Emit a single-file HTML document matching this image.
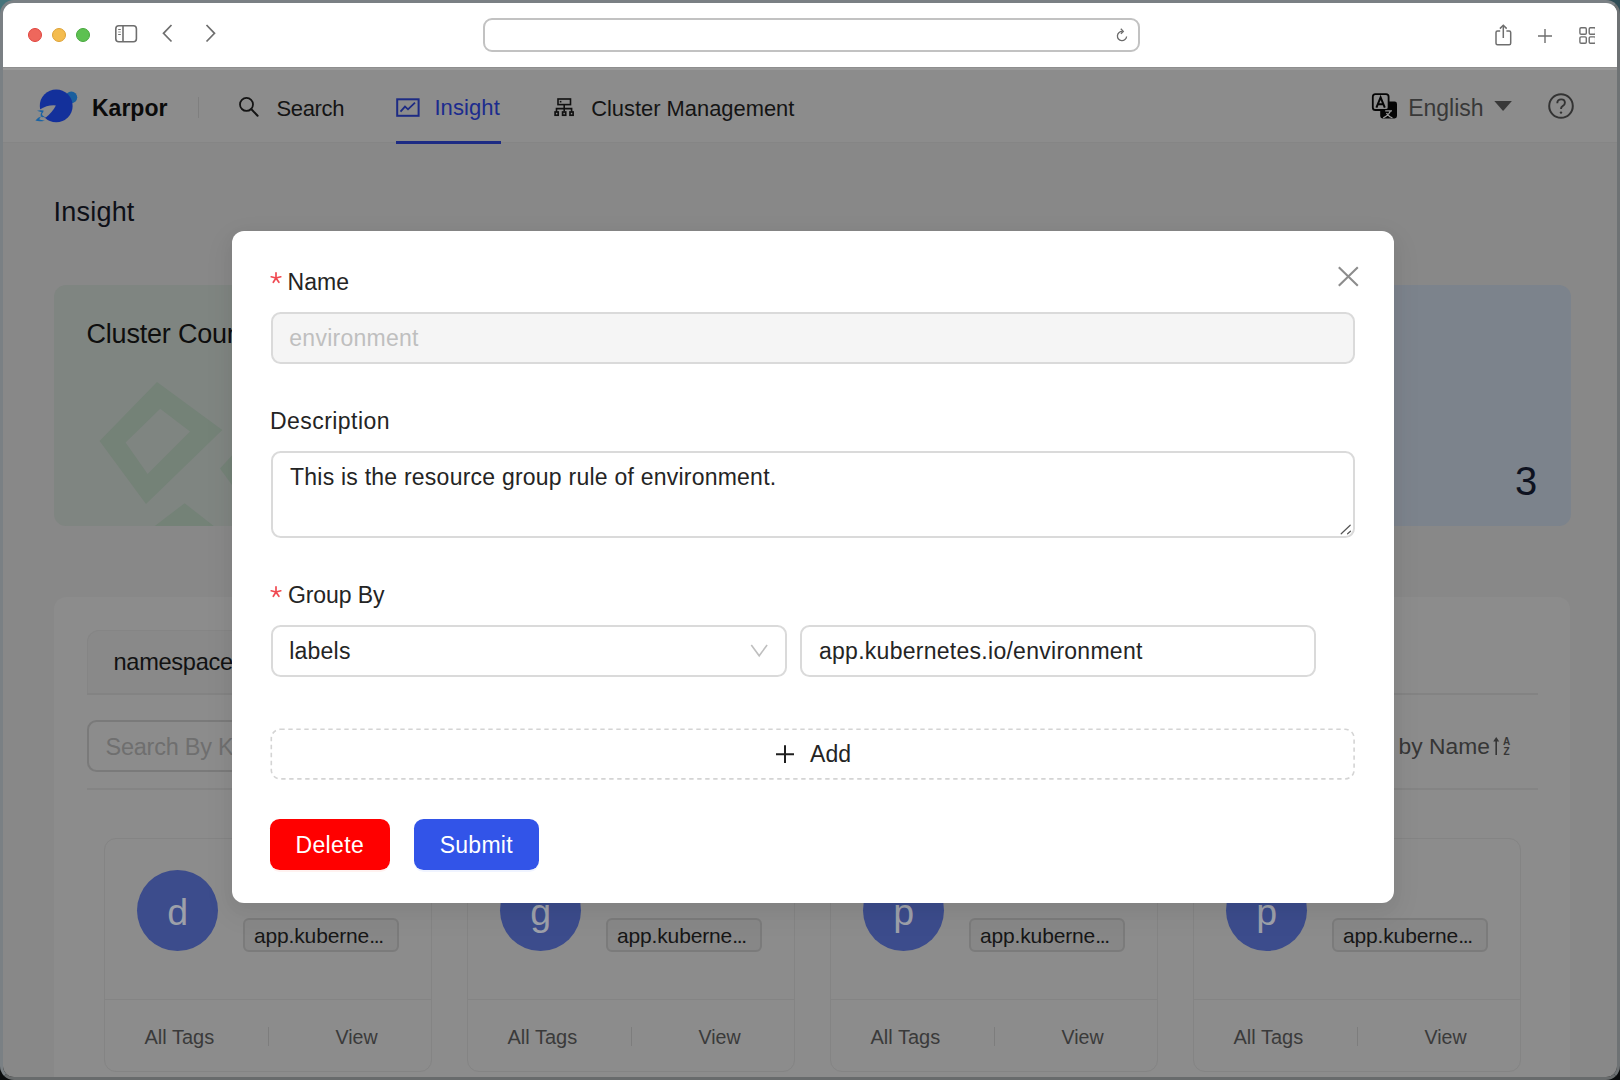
<!DOCTYPE html>
<html><head><meta charset="utf-8">
<style>
*{box-sizing:border-box;margin:0;padding:0}
html,body{width:1620px;height:1080px;overflow:hidden}
body{background:#7a8084;font-family:"Liberation Sans",sans-serif;position:relative}
.a{position:absolute}
.t{position:absolute;white-space:nowrap;line-height:1}
#win{position:absolute;left:0;top:0;width:1620px;height:1080px;clip-path:inset(3px 3px 3px 3px round 11px);background:#888}
</style></head><body>
<!-- desktop corners -->
<div class="a" style="left:0;top:0;width:16px;height:16px;background:#44737a"></div>
<div class="a" style="right:0;top:0;width:16px;height:16px;background:#2e4c55"></div>
<div class="a" style="left:0;bottom:0;width:16px;height:16px;background:#0a0c0d"></div>
<div class="a" style="right:0;bottom:0;width:16px;height:16px;background:#0a0c0d"></div>
<div class="a" style="left:0;top:0;width:1620px;height:1080px;border-radius:14px;border:3px solid #7a8084;border-bottom-color:#686b6c;border-right-color:#6e7274"></div>

<div id="win">
<!-- ===== TOOLBAR ===== -->
<div class="a" style="left:0;top:0;width:1620px;height:67px;background:#fff"></div>
<div class="a" style="left:0;top:67px;width:1620px;height:1px;background:#8e8e8e"></div><div class="a" style="left:0;top:68px;width:1620px;height:2px;background:#999"></div>
<!-- traffic lights -->
<div class="a" style="left:28px;top:28px;width:14px;height:14px;border-radius:50%;background:#ee675c;border:0.5px solid #e0443e"></div>
<div class="a" style="left:52px;top:28px;width:14px;height:14px;border-radius:50%;background:#f4bc4f;border:0.5px solid #dea236"></div>
<div class="a" style="left:76px;top:28px;width:14px;height:14px;border-radius:50%;background:#5dc151;border:0.5px solid #48a83e"></div>
<!-- sidebar icon -->
<svg class="a" style="left:110px;top:20px" width="32" height="28" viewBox="0 0 32 28">
  <rect x="5.8" y="5.8" width="20.6" height="16" rx="3" fill="none" stroke="#6e6e6e" stroke-width="1.6"/>
  <line x1="13" y1="5.8" x2="13" y2="21.8" stroke="#6e6e6e" stroke-width="1.6"/>
  <line x1="8.2" y1="9.5" x2="10.8" y2="9.5" stroke="#6e6e6e" stroke-width="1"/>
  <line x1="8.2" y1="12" x2="10.8" y2="12" stroke="#9a9a9a" stroke-width="1"/>
  <line x1="8.2" y1="14.5" x2="10.8" y2="14.5" stroke="#6e6e6e" stroke-width="1"/>
</svg>
<!-- back / fwd -->
<svg class="a" style="left:155px;top:20px" width="70" height="28" viewBox="0 0 70 28">
  <polyline points="16.5,5 8.5,13.3 16.5,21.5" fill="none" stroke="#6e6e6e" stroke-width="1.7"/>
  <polyline points="51.5,5 59.5,13.3 51.5,21.5" fill="none" stroke="#6e6e6e" stroke-width="1.7"/>
</svg>
<!-- url bar -->
<div class="a" style="left:483px;top:18px;width:657px;height:34px;border:2px solid #c2c2c2;border-radius:9px;background:#fff"></div>
<svg class="a" style="left:1112px;top:24px" width="22" height="22" viewBox="0 0 22 22">
  <path d="M14.6 12.5 A4.6 4.6 0 1 1 10.5 7.5" fill="none" stroke="#6b6b6b" stroke-width="1.3"/>
  <polyline points="8.8,4.8 11.3,7.4 8.9,9.7" fill="none" stroke="#6b6b6b" stroke-width="1.3"/>
</svg>
<!-- right toolbar icons -->
<svg class="a" style="left:1488px;top:18px" width="120" height="34" viewBox="0 0 120 34">
  <path d="M12.2 13 H9.5 Q8 13 8 14.5 V25.3 Q8 26.8 9.5 26.8 H21.2 Q22.7 26.8 22.7 25.3 V14.5 Q22.7 13 21.2 13 H18.4" fill="none" stroke="#6e6e6e" stroke-width="1.5"/>
  <line x1="15.3" y1="7.5" x2="15.3" y2="20" stroke="#6e6e6e" stroke-width="1.5"/>
  <polyline points="11.9,10.6 15.3,7.2 18.7,10.6" fill="none" stroke="#6e6e6e" stroke-width="1.5"/>
  <line x1="50" y1="18" x2="64" y2="18" stroke="#6e6e6e" stroke-width="1.4"/>
  <line x1="57" y1="11" x2="57" y2="25" stroke="#6e6e6e" stroke-width="1.4"/>
  <rect x="91.9" y="9.8" width="6.4" height="6.4" rx="1.2" fill="none" stroke="#6e6e6e" stroke-width="1.4"/>
  <rect x="101.2" y="9.8" width="6.4" height="6.4" rx="1.2" fill="none" stroke="#6e6e6e" stroke-width="1.4"/>
  <rect x="91.9" y="18.9" width="6.4" height="6.4" rx="1.2" fill="none" stroke="#6e6e6e" stroke-width="1.4"/>
  <rect x="101.2" y="18.9" width="6.4" height="6.4" rx="1.2" fill="none" stroke="#6e6e6e" stroke-width="1.4"/>
</svg>
<div class="a" style="left:1595px;top:20px;width:6px;height:30px;background:#fff"></div>
<div class="a" style="left:1613px;top:3px;width:4px;height:64px;background:#fff"></div>

<!-- ===== PAGE (under mask) ===== -->
<div class="a" style="left:0;top:70px;width:1620px;height:73px;background:#8c8c8c;border-bottom:1px solid #858585"></div>

<!-- header content -->
<svg class="a" style="left:30px;top:82px" width="60" height="48" viewBox="0 0 60 48">
  <circle cx="41.3" cy="15.3" r="5.9" fill="#1a5f9e"/>
  <circle cx="26.2" cy="23.9" r="16.4" fill="#13309b"/>
  <path d="M9.8 27.6 Q17.5 22.6 25.9 23.4 Q22.5 30 15.8 35.4 L9 34 Z" fill="#8c8c8c"/>
  <path d="M7 28.8 Q10.5 27.6 13.6 28.6 L13.2 30.2 Q11.5 31.2 12.2 33 Q13 34.3 14.8 34.2 L13.2 35.2 Q11 35.4 10.6 33.6 Q10.4 31.4 11.6 30.2 Q9.5 29.6 7 28.8 Z" fill="#1a62a3"/>
  <path d="M5.4 38.6 Q8 35.2 11.6 34.2 Q9.2 36.2 9.4 37.6 Q11.5 38.6 15 38.4 Q10 40.2 5.4 38.6 Z" fill="#1a62a3"/>
</svg>
<div class="t" style="left:92px;top:97px;font-size:23px;font-weight:700;color:#0b0b0b">Karpor</div>
<div class="a" style="left:198px;top:97px;width:1px;height:21px;background:#7f7f7f"></div>
<svg class="a" style="left:234px;top:92px" width="30" height="30" viewBox="0 0 30 30">
  <circle cx="12.5" cy="12.4" r="6.5" fill="none" stroke="#141414" stroke-width="1.8"/>
  <line x1="17.4" y1="17.3" x2="23.6" y2="23.8" stroke="#141414" stroke-width="2" stroke-linecap="round"/>
</svg>
<div class="t" style="left:276.5px;top:98px;font-size:22px;letter-spacing:-0.35px;color:#141414">Search</div>
<svg class="a" style="left:390px;top:92px" width="34" height="30" viewBox="0 0 34 30">
  <rect x="7.2" y="7.3" width="21.4" height="16.5" fill="none" stroke="#1d2b84" stroke-width="2"/>
  <polyline points="10.5,19.6 15,14.6 18,17.3 25,10.7" fill="none" stroke="#1d2b84" stroke-width="1.8"/>
</svg>
<div class="t" style="left:434.4px;top:97.4px;font-size:22px;color:#1b2b8e;letter-spacing:0.1px">Insight</div>
<div class="a" style="left:396px;top:141px;width:105px;height:3px;background:#1d2b84"></div>
<svg class="a" style="left:550px;top:92px" width="30" height="30" viewBox="0 0 30 30">
  <rect x="8" y="7" width="12.5" height="5.6" fill="none" stroke="#111" stroke-width="1.6"/>
  <rect x="9.8" y="8.9" width="1.6" height="1.6" fill="#111"/>
  <line x1="14.2" y1="12.6" x2="14.2" y2="19.5" stroke="#111" stroke-width="1.6"/>
  <polyline points="6.5,20 6.5,16.6 21.6,16.6 21.6,20" fill="none" stroke="#111" stroke-width="1.6"/>
  <rect x="5.1" y="20" width="3.1" height="3.2" fill="none" stroke="#111" stroke-width="1.7"/>
  <rect x="12.6" y="20" width="3.1" height="3.2" fill="none" stroke="#111" stroke-width="1.7"/>
  <rect x="20" y="20" width="3.1" height="3.2" fill="none" stroke="#111" stroke-width="1.7"/>
</svg>
<div class="t" style="left:591.2px;top:97.8px;font-size:21.9px;color:#141414">Cluster Management</div>
<svg class="a" style="left:1366px;top:88px" width="36" height="36" viewBox="0 0 36 36">
  <rect x="14.2" y="13.5" width="16.8" height="17" rx="2.4" fill="#050505"/>
  <rect x="6.8" y="6.2" width="15.8" height="15.8" rx="2.6" fill="#8c8c8c" stroke="#050505" stroke-width="1.8"/>
  <path d="M10.4 19.6 L14.6 9.4 L18.8 19.6 M11.9 16.2 H17.3" fill="none" stroke="#050505" stroke-width="2"/>
  <path d="M19.2 22.8 H26 M24.6 22.8 Q22.5 27.5 17.2 29.8 M20.4 25.2 Q23 28.8 26.5 30" fill="none" stroke="#9a9a9a" stroke-width="1.3"/>
</svg>
<div class="t" style="left:1408.2px;top:96.6px;font-size:23px;color:#383838">English</div>
<svg class="a" style="left:1490px;top:97px" width="26" height="18" viewBox="0 0 26 18">
  <polygon points="4.3,4 21.9,4 13.1,14.1" fill="#383838"/>
</svg>
<svg class="a" style="left:1545px;top:90px" width="32" height="32" viewBox="0 0 32 32">
  <circle cx="16" cy="16" r="11.8" fill="none" stroke="#333" stroke-width="2"/>
  <path d="M12.3 13.2 Q12.3 9.4 16.2 9.4 Q19.9 9.4 19.9 12.8 Q19.9 15 17.6 16.2 Q16 17.1 16 19" fill="none" stroke="#333" stroke-width="1.9"/>
  <circle cx="16" cy="22.6" r="1.2" fill="#333"/>
</svg>

<!-- page body -->
<div class="t" style="left:53.6px;top:199px;font-size:27px;letter-spacing:0.2px;color:#0e1018">Insight</div>
<!-- stat card 1 (green) -->
<div class="a" style="left:54px;top:285px;width:460px;height:241px;border-radius:12px;background:#7f8581;overflow:hidden">
  <svg class="a" style="left:0;top:0" width="460" height="241" viewBox="54 285 460 241">
    <path fill-rule="evenodd" fill="#748277" d="M157 382 L222.3 430 L146 504 L99.6 441 Z M160.2 408.8 L125.6 442.6 L147.6 474 L190 431.6 Z"/>
    <path fill="#748277" d="M184.6 503.2 L238 545 L130 545 Z"/>
    <path fill="#748277" d="M220 468.6 L260 425 L290 470 L250 510 Z"/>
  </svg>
</div>
<div class="t" style="left:86.5px;top:320.5px;font-size:27px;letter-spacing:-0.2px;color:#0e0e0e">Cluster Count</div>
<!-- stat card 3 (blue) -->
<div class="a" style="left:1110px;top:285px;width:460.5px;height:241px;border-radius:12px;background:#7c838c"></div>
<div class="t" style="left:1515px;top:460.5px;font-size:40px;color:#0e1220">3</div>
<!-- main panel -->
<div class="a" style="left:54px;top:597px;width:1516px;height:520px;border-radius:12px;background:#8c8c8c"></div>
<!-- tabs -->
<div class="a" style="left:87px;top:630px;width:400px;height:63.6px;background:#898989;border:1px solid #858585;border-bottom:none;border-radius:12px 12px 0 0"></div>
<div class="a" style="left:87px;top:693px;width:1451px;height:1.6px;background:#838383"></div>
<div class="t" style="left:113.5px;top:651px;font-size:23.6px;letter-spacing:-0.3px;color:#121212">namespace</div>
<!-- search -->
<div class="a" style="left:86.5px;top:720px;width:400px;height:52px;border:2px solid #7a7a7a;border-radius:9.6px"></div>
<div class="t" style="left:105.5px;top:735.8px;font-size:23.5px;letter-spacing:-0.25px;color:#6f6f6f">Search By Keyword</div>
<div class="t" style="left:1398.6px;top:734.8px;font-size:22.8px;color:#363636">by Name</div>
<svg class="a" style="left:1488px;top:732px" width="30" height="28" viewBox="0 0 30 28">
  <line x1="8.2" y1="8" x2="8.2" y2="23" stroke="#363636" stroke-width="1.6"/>
  <polygon points="5.2,9.5 8.2,5 11.2,9.5" fill="#363636"/>
  <text x="18.6" y="12.6" font-family="Liberation Sans" font-size="10" font-weight="700" fill="#363636" text-anchor="middle">A</text>
  <text x="18.6" y="23.2" font-family="Liberation Sans" font-size="10" font-weight="700" fill="#363636" text-anchor="middle">Z</text>
</svg>
<div class="a" style="left:87px;top:788px;width:1451px;height:2px;background:#848484"></div>
<div class="a" style="left:104px;top:838px;width:328px;height:234px;border-radius:12px;background:#8c8c8c;border:1px solid #848484"></div>
<div class="a" style="left:137.2px;top:870px;width:81px;height:81px;border-radius:50%;background:#3c4c8c"></div>
<div class="t" style="left:137.2px;top:894px;width:81px;text-align:center;font-size:37.5px;color:#9da0a9">d</div>
<div class="a" style="left:242.5px;top:917.5px;width:156.2px;height:34px;border-radius:6px;background:#878787;border:2px solid #7b7b7b"></div>
<div class="t" style="left:254px;top:924.5px;font-size:21px;letter-spacing:-0.15px;color:#161616">app.kuberne<span style="letter-spacing:-1.3px">...</span></div>
<div class="a" style="left:104px;top:999px;width:328px;height:1px;background:#848484"></div>
<div class="a" style="left:268px;top:1027px;width:1px;height:19px;background:#7d7d7d"></div>
<div class="t" style="left:144.5px;top:1026.5px;font-size:20px;color:#3a3a3a">All Tags</div>
<div class="t" style="left:335.5px;top:1027.8px;font-size:19.6px;color:#3a3a3a">View</div>
<div class="a" style="left:467px;top:838px;width:328px;height:234px;border-radius:12px;background:#8c8c8c;border:1px solid #848484"></div>
<div class="a" style="left:500.2px;top:870px;width:81px;height:81px;border-radius:50%;background:#3c4c8c"></div>
<div class="t" style="left:500.2px;top:894px;width:81px;text-align:center;font-size:37.5px;color:#9da0a9">g</div>
<div class="a" style="left:605.5px;top:917.5px;width:156.2px;height:34px;border-radius:6px;background:#878787;border:2px solid #7b7b7b"></div>
<div class="t" style="left:617px;top:924.5px;font-size:21px;letter-spacing:-0.15px;color:#161616">app.kuberne<span style="letter-spacing:-1.3px">...</span></div>
<div class="a" style="left:467px;top:999px;width:328px;height:1px;background:#848484"></div>
<div class="a" style="left:631px;top:1027px;width:1px;height:19px;background:#7d7d7d"></div>
<div class="t" style="left:507.5px;top:1026.5px;font-size:20px;color:#3a3a3a">All Tags</div>
<div class="t" style="left:698.5px;top:1027.8px;font-size:19.6px;color:#3a3a3a">View</div>
<div class="a" style="left:830px;top:838px;width:328px;height:234px;border-radius:12px;background:#8c8c8c;border:1px solid #848484"></div>
<div class="a" style="left:863.2px;top:870px;width:81px;height:81px;border-radius:50%;background:#3c4c8c"></div>
<div class="t" style="left:863.2px;top:894px;width:81px;text-align:center;font-size:37.5px;color:#9da0a9">p</div>
<div class="a" style="left:968.5px;top:917.5px;width:156.2px;height:34px;border-radius:6px;background:#878787;border:2px solid #7b7b7b"></div>
<div class="t" style="left:980px;top:924.5px;font-size:21px;letter-spacing:-0.15px;color:#161616">app.kuberne<span style="letter-spacing:-1.3px">...</span></div>
<div class="a" style="left:830px;top:999px;width:328px;height:1px;background:#848484"></div>
<div class="a" style="left:994px;top:1027px;width:1px;height:19px;background:#7d7d7d"></div>
<div class="t" style="left:870.5px;top:1026.5px;font-size:20px;color:#3a3a3a">All Tags</div>
<div class="t" style="left:1061.5px;top:1027.8px;font-size:19.6px;color:#3a3a3a">View</div>
<div class="a" style="left:1193px;top:838px;width:328px;height:234px;border-radius:12px;background:#8c8c8c;border:1px solid #848484"></div>
<div class="a" style="left:1226.2px;top:870px;width:81px;height:81px;border-radius:50%;background:#3c4c8c"></div>
<div class="t" style="left:1226.2px;top:894px;width:81px;text-align:center;font-size:37.5px;color:#9da0a9">p</div>
<div class="a" style="left:1331.5px;top:917.5px;width:156.2px;height:34px;border-radius:6px;background:#878787;border:2px solid #7b7b7b"></div>
<div class="t" style="left:1343px;top:924.5px;font-size:21px;letter-spacing:-0.15px;color:#161616">app.kuberne<span style="letter-spacing:-1.3px">...</span></div>
<div class="a" style="left:1193px;top:999px;width:328px;height:1px;background:#848484"></div>
<div class="a" style="left:1357px;top:1027px;width:1px;height:19px;background:#7d7d7d"></div>
<div class="t" style="left:1233.5px;top:1026.5px;font-size:20px;color:#3a3a3a">All Tags</div>
<div class="t" style="left:1424.5px;top:1027.8px;font-size:19.6px;color:#3a3a3a">View</div>

<!-- ===== MODAL ===== -->
<div class="a" style="left:231.5px;top:231px;width:1162px;height:672px;border-radius:12px;background:#fff;box-shadow:0 9px 28px 8px rgba(0,0,0,0.03),0 6px 16px 0 rgba(0,0,0,0.05)"></div>
<svg class="a" style="left:1330px;top:258px" width="36" height="36" viewBox="0 0 36 36">
  <path d="M8.8 9.2 L27.8 27.8 M27.8 9.2 L8.8 27.8" stroke="#8c8c8c" stroke-width="2.1"/>
</svg>
<!-- Name -->
<svg class="a" style="left:260px;top:263.3px" width="30" height="30" viewBox="260 263.3 30 30"><path d="M276 278.3 L276.0 273.1 M276 278.3 L271.2 277.1 M276 278.3 L280.8 277.1 M276 278.3 L273.3 282.6 M276 278.3 L278.9 282.6" stroke="#f04a52" stroke-width="1.7" stroke-linecap="round"/></svg>
<div class="t" style="left:287.5px;top:270.9px;font-size:23px;letter-spacing:0.05px;color:#242424">Name</div>
<div class="a" style="left:270.5px;top:312px;width:1084.3px;height:51.5px;border:2px solid #dadada;border-radius:9.6px;background:#f5f5f5"></div>
<div class="t" style="left:289.3px;top:326.9px;font-size:23px;letter-spacing:0.25px;color:#bfbfbf">environment</div>
<!-- Description -->
<div class="t" style="left:270px;top:409.9px;font-size:23px;letter-spacing:0.45px;color:#242424">Description</div>
<div class="a" style="left:270.5px;top:451px;width:1084.3px;height:86.5px;border:2px solid #dadada;border-radius:9.6px;background:#fff"></div>
<div class="t" style="left:290px;top:466.1px;font-size:23px;letter-spacing:0.23px;color:#242424">This is the resource group rule of environment.</div>
<svg class="a" style="left:1336px;top:520px" width="16" height="16" viewBox="0 0 16 16">
  <path d="M5.2 13.8 L14.2 5.2 M11.6 13.8 L14.5 11.2" stroke="#555" stroke-width="1.2" stroke-linecap="round"/>
</svg>
<!-- Group By -->
<svg class="a" style="left:260px;top:576.6px" width="30" height="30" viewBox="260 576.6 30 30"><path d="M276 591.6 L276.0 586.4 M276 591.6 L271.2 590.4 M276 591.6 L280.8 590.4 M276 591.6 L273.3 595.9 M276 591.6 L278.9 595.9" stroke="#f04a52" stroke-width="1.7" stroke-linecap="round"/></svg>
<div class="t" style="left:288px;top:583.9px;font-size:23px;letter-spacing:-0.1px;color:#242424">Group By</div>
<div class="a" style="left:270.5px;top:625.3px;width:516px;height:51.3px;border:2px solid #dadada;border-radius:9.6px;background:#fff"></div>
<div class="t" style="left:289.3px;top:640.4px;font-size:23px;letter-spacing:0.2px;color:#242424">labels</div>
<svg class="a" style="left:745px;top:638px" width="28" height="24" viewBox="0 0 28 24">
  <polyline points="6.3,7 14.2,17.8 22.1,7" fill="none" stroke="#bfbfbf" stroke-width="1.6"/>
</svg>
<div class="a" style="left:800px;top:625.3px;width:516px;height:51.3px;border:2px solid #dadada;border-radius:9.6px;background:#fff"></div>
<div class="t" style="left:819px;top:640.1px;font-size:23px;letter-spacing:0.27px;color:#242424">app.kubernetes.io/environment</div>
<!-- Add -->
<svg class="a" style="left:268px;top:726px" width="1090" height="58" viewBox="268 726 1090 58"><rect x="271.3" y="729.3" width="1082.8" height="49.6" rx="9" fill="#fff" stroke="#d4d4d4" stroke-width="1.6" stroke-dasharray="4.4 3.6"/></svg>
<svg class="a" style="left:770px;top:740px" width="30" height="30" viewBox="0 0 30 30">
  <path d="M6 14.2 H24 M15 5.3 V23" stroke="#1f1f1f" stroke-width="2"/>
</svg>
<div class="t" style="left:810px;top:743.3px;font-size:23px;letter-spacing:0.1px;color:#242424">Add</div>
<!-- buttons -->
<div class="a" style="left:270.4px;top:819px;width:119.2px;height:51px;border-radius:9.6px;background:#ff0000;box-shadow:0 2px 0 rgba(255,38,5,0.06)"></div>
<div class="t" style="left:295.5px;top:834.2px;font-size:23px;letter-spacing:0.36px;color:#fff">Delete</div>
<div class="a" style="left:414px;top:819px;width:125px;height:51px;border-radius:9.6px;background:#3254e8;box-shadow:0 2px 0 rgba(5,68,255,0.06)"></div>
<div class="t" style="left:439.7px;top:834.2px;font-size:23px;letter-spacing:0.26px;color:#fff">Submit</div>
</div>
</body></html>
